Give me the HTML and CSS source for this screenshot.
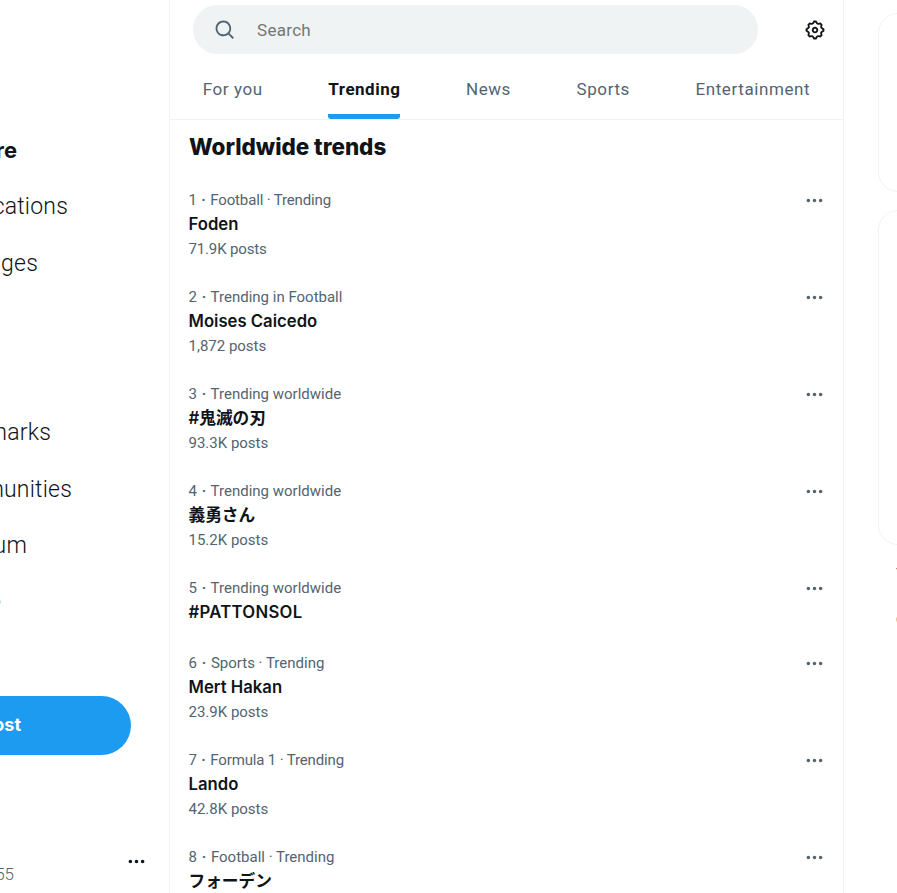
FILE: index.html
```
<!DOCTYPE html>
<html lang="en">
<head>
<meta charset="utf-8">
<title>Explore</title>
<link rel="stylesheet" href="styles.css">
</head>
<body>
<svg class="sprite" aria-hidden="true">
  <symbol id="dots" viewBox="0 0 24 24">
    <path d="M3 12c0-1.100.9-2 2-2s2 .9 2 2-.9 2-2 2-2-.9-2-2zm9 2c1.100 0 2-.9 2-2s-.9-2-2-2-2 .9-2 2 .9 2 2 2zm7 0c1.100 0 2-.9 2-2s-.9-2-2-2-2 .9-2 2 .9 2 2 2z"/>
  </symbol>
</svg>

<div class="page">
  <div class="sidebar">
    <nav class="nav">
      <a class="nav-item nav-explore active"><span>Explore</span></a>
      <a class="nav-item nav-notifications"><span>Notifications</span></a>
      <a class="nav-item nav-messages"><span>Messages</span></a>
      <a class="nav-item"></a>
      <a class="nav-item"></a>
      <a class="nav-item nav-bookmarks"><span>Bookmarks</span></a>
      <a class="nav-item nav-communities"><span>Communities</span></a>
      <a class="nav-item nav-premium"><span>Premium</span></a>
      <a class="nav-item nav-profile"><span>Profile</span></a>
      <a class="nav-item"></a>
    </nav>
    <div class="post-button"><span>Post</span></div>
    <div class="account">
      <div class="handle"><span>55</span></div>
      <svg class="dots"><use href="#dots"/></svg>
    </div>
  </div>

  <main class="main">
    <div class="topbar">
      <div class="search">
        <svg viewBox="0 0 24 24"><path d="M10.250 3.750c-3.590 0-6.500 2.910-6.500 6.500s2.910 6.500 6.500 6.500c1.795 0 3.419-.726 4.596-1.904 1.178-1.177 1.904-2.801 1.904-4.596 0-3.590-2.910-6.500-6.500-6.500zm-8.500 6.500c0-4.694 3.806-8.500 8.500-8.500s8.500 3.806 8.500 8.500c0 1.986-.682 3.815-1.824 5.262l4.781 4.781-1.414 1.414-4.781-4.781c-1.447 1.142-3.276 1.824-5.262 1.824-4.694 0-8.500-3.806-8.500-8.500z"/></svg>
        <span>Search</span>
      </div>
      <svg class="gear" viewBox="0 0 24 24"><path d="M10.540 1.750h2.920l1.570 2.360c.110.170.320.250.530.210l2.530-.590 2.170 2.170-.580 2.540c-.050.200.040.410.210.530l2.360 1.570v2.920l-2.360 1.570c-.170.120-.260.330-.210.530l.580 2.540-2.170 2.170-2.530-.590c-.210-.040-.420.040-.530.210l-1.570 2.360h-2.920l-1.580-2.360c-.110-.170-.320-.250-.520-.210l-2.540.590-2.170-2.170.580-2.540c.050-.200-.030-.410-.210-.530l-2.350-1.570v-2.920L4.100 8.970c.180-.120.260-.330.210-.530L3.730 5.900 5.900 3.730l2.540.590c.200.040.410-.040.520-.210l1.580-2.360zm1.070 2l-.980 1.470C10.050 6.080 9 6.500 7.990 6.270l-1.460-.340-.6.600.330 1.460c.240 1.010-.180 2.070-1.050 2.640l-1.460.980v.780l1.460.980c.870.570 1.290 1.630 1.050 2.640l-.330 1.460.6.600 1.460-.340c1.010-.230 2.060.190 2.640 1.050l.980 1.470h.780l.970-1.470c.580-.860 1.630-1.280 2.650-1.050l1.450.340.610-.6-.340-1.460c-.230-1.010.180-2.070 1.050-2.640l1.470-.980v-.780l-1.470-.980c-.870-.570-1.280-1.630-1.050-2.640l.340-1.460-.610-.6-1.450.340c-1.020.230-2.070-.190-2.650-1.050l-.970-1.470h-.780zM12 10.500c-.830 0-1.500.670-1.500 1.500s.670 1.500 1.500 1.500c.820 0 1.500-.670 1.500-1.500s-.680-1.500-1.500-1.500zM8.500 12c0-1.930 1.560-3.500 3.500-3.500 1.930 0 3.500 1.570 3.500 3.500s-1.570 3.500-3.500 3.500c-1.940 0-3.500-1.570-3.500-3.500z"/></svg>
    </div>

    <div class="tabs">
      <div class="tab"><span>For you</span></div>
      <div class="tab active"><span>Trending</span></div>
      <div class="tab"><span>News</span></div>
      <div class="tab"><span>Sports</span></div>
      <div class="tab"><span>Entertainment</span></div>
    </div>

    <h2>Worldwide trends</h2>

    <div class="trend">
      <div class="meta meta-tight">1 <b>·</b> Football · Trending</div>
      <div class="name">Foden</div>
      <div class="count meta-tight">71.9K posts</div>
      <svg class="dots"><use href="#dots"/></svg>
    </div>
    <div class="trend">
      <div class="meta">2 <b>·</b> Trending in Football</div>
      <div class="name">Moises Caicedo</div>
      <div class="count">1,872 posts</div>
      <svg class="dots"><use href="#dots"/></svg>
    </div>
    <div class="trend">
      <div class="meta">3 <b>·</b> Trending worldwide</div>
      <div class="name" lang="ja">#鬼滅の刃</div>
      <div class="count">93.3K posts</div>
      <svg class="dots"><use href="#dots"/></svg>
    </div>
    <div class="trend">
      <div class="meta">4 <b>·</b> Trending worldwide</div>
      <div class="name" lang="ja">義勇さん</div>
      <div class="count">15.2K posts</div>
      <svg class="dots"><use href="#dots"/></svg>
    </div>
    <div class="trend">
      <div class="meta">5 <b>·</b> Trending worldwide</div>
      <div class="name name-wide">#PATTONSOL</div>
      <svg class="dots"><use href="#dots"/></svg>
    </div>
    <div class="trend">
      <div class="meta">6 <b>·</b> Sports · Trending</div>
      <div class="name">Mert Hakan</div>
      <div class="count">23.9K posts</div>
      <svg class="dots"><use href="#dots"/></svg>
    </div>
    <div class="trend">
      <div class="meta meta-tight">7 <b>·</b> Formula 1 · Trending</div>
      <div class="name">Lando</div>
      <div class="count">42.8K posts</div>
      <svg class="dots"><use href="#dots"/></svg>
    </div>
    <div class="trend">
      <div class="meta">8 <b>·</b> Football · Trending</div>
      <div class="name" lang="ja">フォーデン</div>
      <svg class="dots"><use href="#dots"/></svg>
    </div>
  </main>

  <aside class="aside">
    <div class="card card-small"></div>
    <div class="card card-large"></div>
    <div class="links">
      <div>Terms of Service</div>
      <div class="indent">Privacy Policy</div>
      <div>© 2024 X Corp.</div>
    </div>
  </aside>
</div>
</body>
</html>
```
FILE: styles.css
```
* {
    box-sizing: border-box;
}

body {
    margin: 0;
    background: #fff;
    color: #0f1419;
    font-family: Roboto, "Noto Sans CJK JP", sans-serif;
    overflow: hidden;
}

.sprite {
    display: none;
}

.page {
    display: grid;
    grid-template-columns: 169px 675px 1fr;
    height: 893px;
    overflow: hidden;
}

/* left column */
.sidebar {
    overflow: hidden;
    padding-top: 122px;
}

/* labels hang off the left edge, so each one is sized by its right end */
.nav-item {
    display: flex;
    justify-content: flex-end;
    align-items: center;
    height: 56.5px;
    font-size: 23px;
    font-weight: 300;
    letter-spacing: .2px;
    white-space: nowrap;
}

.nav-item.active {
    font-family: Inter, sans-serif;
    font-size: 22px;
    font-weight: 700;
    letter-spacing: 0;
}

.nav-explore { width: 17px; }
.nav-notifications { width: 68px; }
.nav-messages { width: 38px; }
.nav-bookmarks { width: 51px; }
.nav-communities { width: 72px; }
.nav-premium { width: 27px; }
.nav-profile { width: 1px; }

.post-button {
    display: flex;
    justify-content: flex-end;
    align-items: center;
    width: 131px;
    height: 59px;
    margin-top: 9px;
    padding: 0 110px 2px 0;
    border-radius: 0 30px 30px 0;
    background: #1d9bf0;
    color: #fff;
    font: 700 18px Inter, sans-serif;
}

.account {
    display: flex;
    justify-content: space-between;
    width: 147px;
    margin-top: 96px;
}

.handle {
    display: flex;
    justify-content: flex-end;
    width: 14px;
    padding-top: 13px;
    color: #536471;
    font-size: 17px;
    font-weight: 300;
    line-height: 20px;
}

.dots {
    width: 21px;
    height: 21px;
    fill: #536471;
}

.account .dots {
    fill: #0f1419;
}

/* center column */
.main {
    border: 1px solid #eff3f4;
    border-width: 0 1px;
    overflow: hidden;
}

.topbar {
    display: flex;
    align-items: center;
    justify-content: space-between;
    height: 59px;
    padding: 0 17px 0 23px;
}

.search {
    display: flex;
    align-items: center;
    gap: 21px;
    width: 565px;
    height: 49px;
    padding-left: 21px;
    border-radius: 25px;
    background: #eff3f4;
    color: #757575;
    font-size: 17px;
    letter-spacing: .3px;
}

.search svg {
    width: 22px;
    height: 22px;
    fill: #536471;
}

.gear {
    width: 22px;
    height: 22px;
    fill: #0f1419;
}

.tabs {
    display: flex;
    height: 61px;
    border-bottom: 1px solid #eff3f4;
}

.tab {
    display: flex;
    flex: 1 0 auto;
    justify-content: center;
    color: #536471;
    font-size: 17px;
    letter-spacing: .6px;
    line-height: 60px;
}

.tab.active span {
    border-bottom: 5px solid #1d9bf0;
    border-radius: 3px;
    color: #0f1419;
    font-weight: 700;
    letter-spacing: .5px;
}

h2 {
    height: 55px;
    margin: 0;
    padding-left: 19px;
    font: 800 22.400px/54px Inter, sans-serif;
}

.trend {
    position: relative;
    padding: 13px 18.5px;
}

.trend .dots {
    position: absolute;
    top: 15px;
    right: 18px;
}

.meta,
.count {
    color: #536471;
    font-size: 15px;
}

.meta {
    line-height: 24px;
}

.meta b {
    margin: 0 1px;
}

.meta-tight {
    letter-spacing: -.15px;
}

.count {
    height: 22px;
    line-height: 24px;
}

.name {
    height: 25px;
    font: 600 16.7px/25px Inter, "Noto Sans CJK JP", sans-serif;
}

.name-wide {
    letter-spacing: .3px;
}

/* right column */
.aside {
    padding: 13px 0 0 34px;
    overflow: hidden;
}

.card {
    width: 390px;
    border: 1px solid #eff3f4;
    border-radius: 20px;
}

.card-small {
    height: 179px;
}

.card-large {
    height: 335px;
    margin-top: 18px;
}

.links {
    padding: 18px 0 0 18px;
    color: #536471;
    font-size: 14px;
    line-height: 23px;
    white-space: nowrap;
}

.links .indent {
    padding-left: 1px;
}
```
